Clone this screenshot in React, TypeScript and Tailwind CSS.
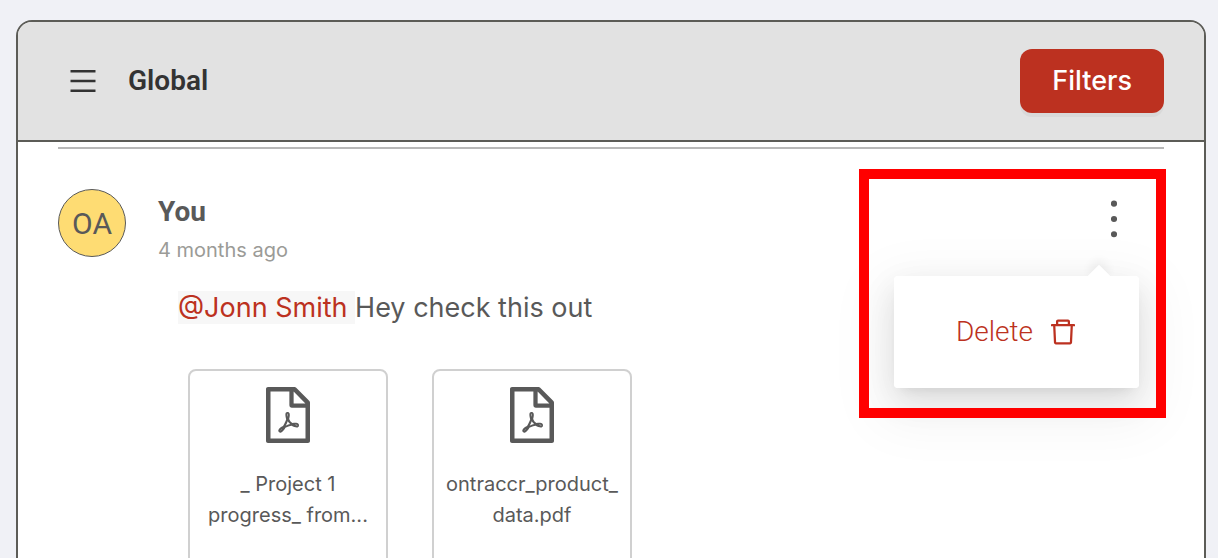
import { useState } from 'react';
import {
  AiOutlineDelete,
  AiOutlineFilePdf,
  AiOutlineMenu,
  AiOutlineMore,
} from 'react-icons/ai';

interface Attachment {
  id: number;
  lines: string[];
}

const attachments: Attachment[] = [
  { id: 1, lines: ['_ Project 1', 'progress_ from...'] },
  { id: 2, lines: ['ontraccr_product_', 'data.pdf'] },
];

function BoardHeader() {
  return (
    <header className="flex items-center justify-between border-b-2 border-[#5c5c57] bg-[#e2e2e2] py-[27px] pr-10 pl-[49px]">
      <div className="flex items-center gap-[29px]">
        <button type="button" aria-label="Menu" className="text-[#333]">
          <AiOutlineMenu size={32} />
        </button>
        <h1 className="font-[Roboto,sans-serif] text-[28px] leading-9 font-semibold text-[#333]">
          Global
        </h1>
      </div>
      <button
        type="button"
        className="h-16 rounded-xl bg-[#bc3120] px-8 text-[27px] font-medium text-white shadow-[0_4px_0_rgba(0,0,0,0.04)]"
      >
        Filters
      </button>
    </header>
  );
}

function MessageMenu() {
  const [open, setOpen] = useState(true);

  return (
    <div className="relative mt-0.5 mr-[22px]">
      <button
        type="button"
        aria-label="More"
        aria-expanded={open}
        onClick={() => setOpen(!open)}
        className="block text-[#595959]"
      >
        <AiOutlineMore size={56} />
      </button>
      {open && (
        <div className="absolute top-[85px] right-[3px] rounded bg-white shadow-[0_6px_12px_-8px_rgba(0,0,0,0.12),0_12px_32px_rgba(0,0,0,0.1),0_18px_56px_16px_rgba(0,0,0,0.05)]">
          <span className="absolute -top-2 right-8 size-4 rotate-45 bg-white shadow-[-4px_-4px_10px_rgba(0,0,0,0.06)]" />
          <button
            type="button"
            className="relative flex h-28 items-center gap-3.5 rounded bg-white pr-15 pl-[62px] font-[Roboto,sans-serif] text-[28px] font-light text-[#bc3120]"
          >
            Delete
            <AiOutlineDelete size={32} />
          </button>
        </div>
      )}
      {/* highlight frame around the menu */}
      <div className="pointer-events-none absolute -top-[22px] -right-6 h-[249px] w-[307px] border-10 border-[#ff0000]" />
    </div>
  );
}

function AttachmentCard({ lines }: { lines: string[] }) {
  return (
    <a
      href="#attachment"
      className="flex h-60 w-[200px] flex-col items-center gap-[22px] rounded-lg border-2 border-[#d0d0d0] pt-3 text-[#595959]"
    >
      <AiOutlineFilePdf size={64} />
      <span className="text-center text-[20px] leading-[31px] whitespace-nowrap">
        {lines.map((line) => (
          <span key={line} className="block">
            {line}
          </span>
        ))}
      </span>
    </a>
  );
}

function Message() {
  return (
    <article className="pt-10">
      <div className="flex items-start justify-between">
        <div className="flex gap-8">
          <div className="flex size-[68px] items-center justify-center rounded-full border border-[#595959] bg-[#fedc73] font-[Roboto,sans-serif] text-[30px] text-[#595959]">
            OA
          </div>
          <div>
            <p className="font-[Roboto,sans-serif] text-[28px] leading-[46px] font-bold text-[#595959]">
              You
            </p>
            <p className="text-[20px] leading-[30px] text-[#9b9b97]">4 months ago</p>
          </div>
        </div>
        <MessageMenu />
      </div>
      <div className="pt-[23px] pl-[120px]">
        <p className="text-[27px] leading-10 text-[#595959]">
          <a href="#user" className="bg-[#f7f7f7] text-[#bc3120]">
            @Jonn Smith{' '}
          </a>
          Hey check this out
        </p>
        <div className="flex gap-11 pt-[41px] pl-2.5">
          {attachments.map((item) => (
            <AttachmentCard key={item.id} lines={item.lines} />
          ))}
        </div>
      </div>
    </article>
  );
}

export default function App() {
  return (
    <main className="h-screen overflow-hidden bg-[#f0f1f6] pt-5 pr-3 pl-4 font-[Inter,sans-serif]">
      <section className="overflow-hidden rounded-2xl border-2 border-[#5c5c57] bg-white">
        <BoardHeader />
        <div className="px-10 pt-[5px]">
          <hr className="border-t-2 border-[#b8b8b8]" />
          <Message />
        </div>
      </section>
    </main>
  );
}
